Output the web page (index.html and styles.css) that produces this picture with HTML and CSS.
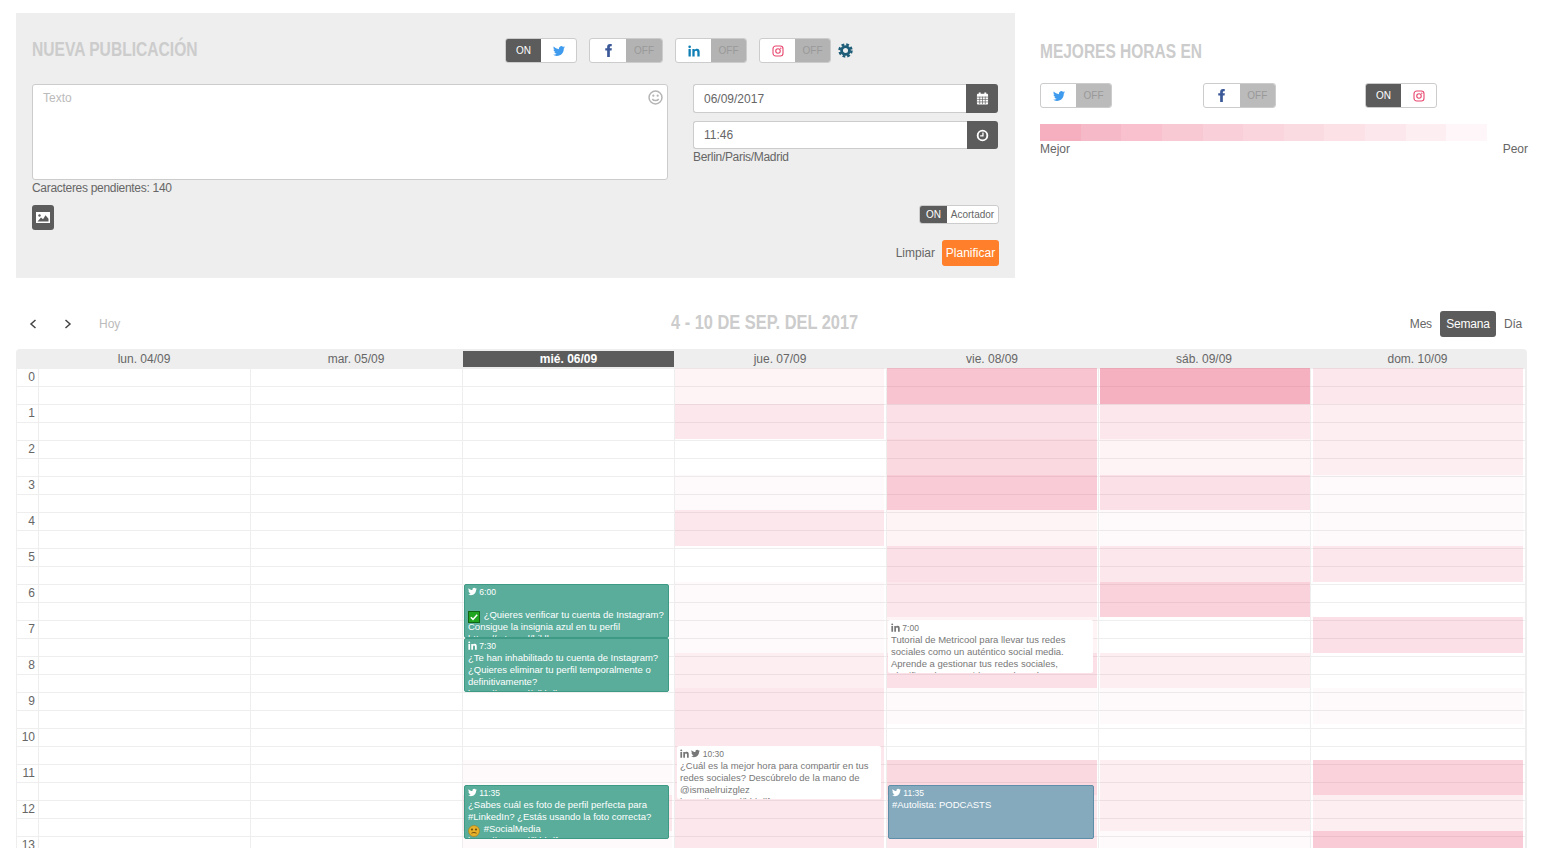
FILE: index.html
```html
<!DOCTYPE html>
<html lang="es">
<head>
  <meta charset="UTF-8">
  <meta name="viewport" content="width=device-width, initial-scale=1.0">
  <title>Planificador</title>
  <link rel="stylesheet" href="styles.css">
</head>
<body>
  <svg class="icon-defs" xmlns="http://www.w3.org/2000/svg">
    <symbol id="i-tw" viewBox="0 0 24 24"><path fill="currentColor" d="M23.953 4.57a10 10 0 01-2.825.775 4.958 4.958 0 002.163-2.723c-.951.555-2.005.959-3.127 1.184a4.92 4.92 0 00-8.384 4.482C7.69 8.095 4.067 6.13 1.64 3.162a4.822 4.822 0 00-.666 2.475c0 1.71.87 3.213 2.188 4.096a4.904 4.904 0 01-2.228-.616v.06a4.923 4.923 0 003.946 4.827 4.996 4.996 0 01-2.212.085 4.936 4.936 0 004.604 3.417 9.867 9.867 0 01-6.102 2.105c-.39 0-.779-.023-1.17-.067a13.995 13.995 0 007.557 2.209c9.053 0 13.998-7.496 13.998-13.985 0-.21 0-.42-.015-.63A9.935 9.935 0 0024 4.59z"/></symbol>
    <symbol id="i-fb" viewBox="0 0 24 24"><path fill="currentColor" d="M14.5 8V5.5c0-1 .5-1.5 1.6-1.5H18V0h-3.2C11.2 0 9.5 2.2 9.5 5.2V8H6v4h3.5v12h5V12h3.2l.5-4z"/></symbol>
    <symbol id="i-li" viewBox="0 0 24 24"><path fill="currentColor" d="M1 8h4.6v15H1zM3.3 1a2.6 2.6 0 110 5.300 2.600 2.600 0 010-5.300zM8.700 8h4.400v2.100c.7-1.300 2.300-2.500 4.600-2.500 4.700 0 5.600 3.100 5.600 7.100V23h-4.600v-7.300c0-1.800 0-4-2.500-4s-2.900 1.900-2.900 3.900V23H8.700z"/></symbol>
    <symbol id="i-ig" viewBox="0 0 24 24"><g fill="none" stroke="currentColor" stroke-width="2.200"><rect x="2" y="2" width="20" height="20" rx="5.500"/><circle cx="12" cy="12" r="4.500"/></g><circle cx="17.600" cy="6.400" r="1.400" fill="currentColor"/></symbol>
  </svg>

  <div class="top">
    <section class="panel">
      <div class="panel-head">
        <h2 class="heading heading-new">NUEVA PUBLICACIÓN</h2>
        <div class="toggle"><span class="tg-on">ON</span><span class="tg-icon c-tw"><svg class="ico"><use href="#i-tw"/></svg></span></div>
        <div class="toggle wide"><span class="tg-icon c-fb"><svg class="ico"><use href="#i-fb"/></svg></span><span class="tg-off">OFF</span></div>
        <div class="toggle"><span class="tg-icon c-li"><svg class="ico"><use href="#i-li"/></svg></span><span class="tg-off">OFF</span></div>
        <div class="toggle"><span class="tg-icon c-ig"><svg class="ico"><use href="#i-ig"/></svg></span><span class="tg-off">OFF</span></div>
        <svg class="gear" viewBox="0 0 16 16"><circle cx="8" cy="8" r="4.200" fill="none" stroke="#1d5d78" stroke-width="3"/><circle cx="8" cy="8" r="6.400" fill="none" stroke="#1d5d78" stroke-width="2.600" stroke-dasharray="2.900 2.130"/></svg>
      </div>
      <div class="form-row">
        <div class="form-left">
          <div class="text-wrap">
            <textarea class="text-box" placeholder="Texto"></textarea>
            <svg class="smile" viewBox="0 0 16 16"><g fill="none" stroke="#b5b5b5" stroke-width="1.600"><circle cx="8" cy="8" r="6.900"/><path d="M4.600 9.600c1.500 2.300 5.300 2.300 6.800 0"/></g><circle cx="5.700" cy="6" r="1.200" fill="#b5b5b5"/><circle cx="10.300" cy="6" r="1.200" fill="#b5b5b5"/></svg>
          </div>
          <div class="count">Caracteres pendientes: 140</div>
          <button class="img-btn" type="button"><svg class="img-ico" viewBox="0 0 14 11"><rect x=".5" y=".5" width="13" height="10" fill="#fff" stroke="#fff"/><path d="M1.500 9.500l3.500-4 2 1.800 2.500-4 3 3.500v2.700z" fill="#5c5c5c"/><circle cx="3.500" cy="3.500" r="1.200" fill="#5c5c5c"/></svg></button>
        </div>
        <div class="form-right">
          <div class="input-group">
            <input class="field" type="text" value="06/09/2017">
            <span class="addon"><svg class="addon-ico" viewBox="0 0 14 14"><rect x="1" y="2" width="12" height="11.500" rx="1" fill="#fff"/><rect x="3" y=".5" width="2" height="3" fill="#fff"/><rect x="9" y=".5" width="2" height="3" fill="#fff"/><path d="M1 5.500h12M1 8h12M1 10.700h12M4 5v8M7 5v8M10 5v8" stroke="#5c5c5c" stroke-width=".7"/></svg></span>
          </div>
          <div class="input-group time">
            <input class="field" type="text" value="11:46">
            <span class="addon"><svg class="addon-ico" viewBox="0 0 14 14"><circle cx="7" cy="7" r="5.200" fill="none" stroke="#fff" stroke-width="2"/><path d="M7.500 3.800v3.700H4.500" fill="none" stroke="#fff" stroke-width="1.400"/></svg></span>
          </div>
          <div class="zone">Berlin/Paris/Madrid</div>
          <div class="short-row">
            <div class="toggle small"><span class="tg-on">ON</span><span class="tg-text">Acortador</span></div>
          </div>
          <div class="actions">
            <a class="link-clear">Limpiar</a>
            <button class="btn-plan" type="button">Planificar</button>
          </div>
        </div>
      </div>
    </section>

    <section class="best">
      <h2 class="heading best-title">MEJORES HORAS EN</h2>
      <div class="best-toggles">
        <div class="toggle"><span class="tg-icon c-tw"><svg class="ico"><use href="#i-tw"/></svg></span><span class="tg-off">OFF</span></div>
        <div class="toggle mid"><span class="tg-icon c-fb"><svg class="ico"><use href="#i-fb"/></svg></span><span class="tg-off">OFF</span></div>
        <div class="toggle"><span class="tg-on">ON</span><span class="tg-icon c-ig"><svg class="ico"><use href="#i-ig"/></svg></span></div>
      </div>
      <div class="legend">
        <div class="step s11"></div><div class="step s10"></div><div class="step s9"></div><div class="step s8"></div><div class="step s7"></div><div class="step s6"></div><div class="step s5"></div><div class="step s4"></div><div class="step s3"></div><div class="step s2"></div><div class="step s1"></div>
      </div>
      <div class="legend-labels"><span>Mejor</span><span>Peor</span></div>
    </section>
  </div>

  <div class="toolbar">
    <div class="nav">
      <svg class="chev" viewBox="0 0 8 10"><path d="M6.500 1L2 5l4.500 4" fill="none" stroke="#444" stroke-width="1.500"/></svg>
      <svg class="chev" viewBox="0 0 8 10"><path d="M1.500 1L6 5 1.500 9" fill="none" stroke="#444" stroke-width="1.500"/></svg>
      <span class="today">Hoy</span>
    </div>
    <h2 class="heading range">4 - 10 DE SEP. DEL 2017</h2>
    <div class="views">
      <span>Mes</span>
      <span class="view-active">Semana</span>
      <span>Día</span>
    </div>
  </div>

  <div class="calendar">
    <div class="cal-head">
      <div></div>
      <div class="day-name">lun. 04/09</div>
      <div class="day-name">mar. 05/09</div>
      <div class="day-name today-col">mié. 06/09</div>
      <div class="day-name">jue. 07/09</div>
      <div class="day-name">vie. 08/09</div>
      <div class="day-name">sáb. 09/09</div>
      <div class="day-name">dom. 10/09</div>
    </div>
    <div class="cal-body">
      <div class="hours">
        <div>0</div><div>1</div><div>2</div><div>3</div><div>4</div><div>5</div><div>6</div><div>7</div><div>8</div><div>9</div><div>10</div><div>11</div><div>12</div><div>13</div>
      </div>
      <div class="day"></div>
      <div class="day"></div>
      <div class="day d-wed">
        <div class="h l0"></div><div class="h l0"></div><div class="h l0"></div><div class="h l0"></div><div class="h l0"></div><div class="h l0"></div><div class="h l0"></div><div class="h l0"></div><div class="h l0"></div><div class="h l0"></div><div class="h l0"></div><div class="h l1"></div><div class="h l4"></div><div class="h l1"></div>
        <div class="event green ev-600">
          <div class="ev-meta"><svg class="ev-ico"><use href="#i-tw"/></svg> 6:00</div>
          <div class="ev-blank"></div>
          <svg class="emoji" viewBox="0 0 12 12"><rect x=".5" y=".5" width="11" height="11" fill="#1fa51f" stroke="#136613"/><path d="M2.800 6.200l2.200 2.200 4.200-4.600" fill="none" stroke="#fff" stroke-width="1.500"/></svg> ¿Quieres verificar tu cuenta de Instagram? Consigue la insignia azul en tu perfil
          <div>https://mtr.cool/hjklbg</div>
        </div>
        <div class="event green ev-730">
          <div class="ev-meta"><svg class="ev-ico"><use href="#i-li"/></svg> 7:30</div>
          ¿Te han inhabilitado tu cuenta de Instagram? ¿Quieres eliminar tu perfil temporalmente o definitivamente?
          <div>https://mtr.cool/plkbdh</div>
        </div>
        <div class="event green ev-1135">
          <div class="ev-meta"><svg class="ev-ico"><use href="#i-tw"/></svg> 11:35</div>
          ¿Sabes cuál es foto de perfil perfecta para #LinkedIn? ¿Estás usando la foto correcta?
          <div><svg class="emoji" viewBox="0 0 12 12"><circle cx="6" cy="6" r="5.500" fill="#e8b12a" stroke="#a87a12" stroke-width=".6"/><circle cx="4" cy="4.500" r=".9" fill="#5a3d08"/><circle cx="8" cy="4.500" r=".9" fill="#5a3d08"/><path d="M3.500 8.200c1.500-.9 3.200-.9 5 0" fill="none" stroke="#5a3d08" stroke-width=".9"/></svg> #SocialMedia</div>
          <div>https://mtr.cool/lkbhdf</div>
        </div>
      </div>
      <div class="day d-thu">
        <div class="h l2"></div><div class="h l4"></div><div class="h l0"></div><div class="h l1"></div><div class="h l4"></div><div class="h l0"></div><div class="h l1"></div><div class="h l1"></div><div class="h l3"></div><div class="h l4"></div><div class="h l4"></div><div class="h l4"></div><div class="h l4"></div><div class="h l4"></div>
        <div class="event plain ev-1030">
          <div class="ev-meta"><svg class="ev-ico"><use href="#i-li"/></svg> <svg class="ev-ico"><use href="#i-tw"/></svg> 10:30</div>
          ¿Cuál es la mejor hora para compartir en tus redes sociales? Descúbrelo de la mano de @ismaelruizglez
          <div>https://mtr.cool/bhkdlf</div>
        </div>
      </div>
      <div class="day d-fri">
        <div class="h l9"></div><div class="h l5"></div><div class="h l6"></div><div class="h l8"></div><div class="h l2"></div><div class="h l5"></div><div class="h l4"></div><div class="h l2"></div><div class="h l5"></div><div class="h l1"></div><div class="h l0"></div><div class="h l6"></div><div class="h l4"></div><div class="h l4"></div>
        <div class="event plain ev-700">
          <div class="ev-meta"><svg class="ev-ico"><use href="#i-li"/></svg> 7:00</div>
          Tutorial de Metricool para llevar tus redes sociales como un auténtico social media. Aprende a gestionar tus redes sociales, planificando contenido y mucho más
        </div>
        <div class="event blue ev-1135-b">
          <div class="ev-meta"><svg class="ev-ico"><use href="#i-tw"/></svg> 11:35</div>
          #Autolista: PODCASTS
        </div>
      </div>
      <div class="day d-sat">
        <div class="h l12"></div><div class="h l4"></div><div class="h l2"></div><div class="h l5"></div><div class="h l1"></div><div class="h l4"></div><div class="h l7"></div><div class="h l0"></div><div class="h l3"></div><div class="h l1"></div><div class="h l0"></div><div class="h l3"></div><div class="h l3"></div><div class="h l1"></div>
      </div>
      <div class="day d-sun">
        <div class="h l4"></div><div class="h l3"></div><div class="h l3"></div><div class="h l1"></div><div class="h l1"></div><div class="h l4"></div><div class="h l0"></div><div class="h l5"></div><div class="h l0"></div><div class="h l1"></div><div class="h l0"></div><div class="h l7"></div><div class="h l3"></div><div class="h l8"></div>
      </div>
    </div>
  </div>
</body>
</html>
```

FILE: styles.css
```css
html, body { margin: 0; padding: 0; height: 848px; overflow: hidden; }
body {
  font-family: "Liberation Sans", Arial, sans-serif;
  font-size: 12px;
  color: #666;
  background-color: #fff;
}
.icon-defs { display: none; }

/* no condensed face installed, so the bold sans is squeezed */
.heading {
  margin: 0;
  font-family: "Liberation Sans", Arial, sans-serif;
  font-size: 20px;
  font-weight: bold;
  line-height: 24px;
  color: #ccc;
  white-space: nowrap;
  transform-origin: left center;
}

/* top area */
.top { display: flex; padding: 13px 0 0 16px; }
.panel { width: 999px; height: 265px; box-sizing: border-box; padding: 25px 16px 0; background-color: #eee; }
.panel-head { display: flex; align-items: center; height: 25px; margin-bottom: 21px; }
.heading-new { width: 473px; margin-bottom: 4px; transform: scaleX(.78); flex: none; }
.panel-head .toggle { margin-right: 12px; }
.gear { width: 15px; height: 15px; margin-left: -5px; }

.toggle {
  display: flex;
  height: 25px;
  width: 72px;
  box-sizing: border-box;
  border: 1px solid #ccc;
  border-radius: 3px;
  overflow: hidden;
  background-color: #fff;
  font-size: 10px;
}
.toggle.wide { width: 74px; }
.toggle.mid { width: 73px; }
.toggle span { display: flex; flex: 1; align-items: center; justify-content: center; }
.tg-on { background-color: #5c5c5c; color: #fff; }
.tg-off { background-color: #b3b3b3; color: #999; }
.ico { width: 12px; height: 12px; }
.c-tw { color: #3f9bee; }
.c-fb { color: #3b5998; }
.c-fb .ico { width: 13px; height: 13px; }
.c-li { color: #0f7fb5; }
.c-ig { color: #e8466e; }

.form-row { display: flex; gap: 25px; }
.form-left { width: 636px; }
.form-right { width: 306px; }

.text-wrap { position: relative; height: 96px; }
.text-box {
  display: block;
  width: 100%;
  height: 96px;
  box-sizing: border-box;
  padding: 6px 10px;
  border: 1px solid #ccc;
  border-radius: 3px;
  resize: none;
  font: 12px "Liberation Sans", Arial, sans-serif;
  outline: none;
}
.text-box::placeholder { color: #bbb; }
.smile { position: absolute; top: 6px; right: 5px; width: 15px; height: 15px; }
.count { height: 16px; line-height: 16px; letter-spacing: -.3px; }
.img-btn { display: flex; align-items: center; justify-content: center; width: 22px; height: 25px; margin-top: 9px; padding: 0; border: none; border-radius: 3px; background-color: #5c5c5c; }
.img-ico { width: 14px; height: 11px; }

.input-group { display: flex; height: 29px; margin-right: 1px; margin-bottom: 8px; }
.input-group.time { height: 28px; margin-bottom: 0; }
.field {
  flex: 1;
  min-width: 0;
  box-sizing: border-box;
  padding: 0 10px;
  border: 1px solid #ccc;
  border-right: none;
  border-radius: 3px 0 0 3px;
  font: 12px "Liberation Sans", Arial, sans-serif;
  color: #666;
  outline: none;
}
.addon { display: flex; align-items: center; justify-content: center; width: 32px; border-radius: 0 3px 3px 0; background-color: #5c5c5c; }
.time .addon { width: 31px; }
.addon-ico { width: 13px; height: 13px; }
.zone { height: 16px; line-height: 16px; letter-spacing: -.3px; }
.short-row { display: flex; justify-content: flex-end; margin-top: 40px; }
.toggle.small { width: 80px; height: 19px; }
.toggle.small .tg-on { flex: 0 0 27px; font-size: 10px; }
.toggle.small .tg-text { font-size: 10px; color: #666; }
.actions { display: flex; align-items: center; justify-content: flex-end; gap: 7px; margin-top: 16px; }
.link-clear { color: #666; }
.btn-plan { width: 57px; height: 26px; padding: 0; border: none; border-radius: 3px; background-color: #ff7f2a; color: #fff; font: 12px "Liberation Sans", Arial, sans-serif; }

.best { width: 488px; margin-left: 25px; padding-top: 26px; }
.best-title { transform: scaleX(.775); }
.best-toggles { display: flex; gap: 91px; margin-top: 20px; }
.best-toggles .toggle:last-child { margin-left: -2px; }
.best .tg-off { background-color: #bbb; }
.legend { display: flex; width: 447px; height: 17px; margin-top: 16px; }
.step { flex: 1; }
.s11 { background-color: #f5afbe; }
.s10 { background-color: #f6b9c7; }
.s9 { background-color: #f8c1cd; }
.s8 { background-color: #f8c8d3; }
.s7 { background-color: #f9cfd9; }
.s6 { background-color: #fad5dd; }
.s5 { background-color: #fbdbe2; }
.s4 { background-color: #fce2e7; }
.s3 { background-color: #fce8ec; }
.s2 { background-color: #fdeef1; }
.s1 { background-color: #fef6f8; }
.legend-labels { display: flex; justify-content: space-between; line-height: 16px; }

/* calendar toolbar */
.toolbar { display: flex; align-items: center; height: 26px; margin: 33px 16px 12px; }
.nav { display: flex; align-items: center; gap: 27px; width: 655px; box-sizing: border-box; padding-left: 13px; }
.chev { width: 8px; height: 10px; }
.today { color: #bbb; }
.range { margin-bottom: 4px; transform: scaleX(.82); }
.views { display: flex; align-items: center; gap: 8px; margin-left: auto; padding-right: 5px; letter-spacing: -.2px; }
.view-active { width: 56px; padding: 6px 0; border-radius: 3px; background-color: #5c5c5c; color: #fff; text-align: center; }

/* calendar */
.calendar { width: 1511px; margin-left: 16px; }
.cal-head, .cal-body { display: grid; grid-template-columns: 21px repeat(6, 212px) 215px; padding-left: 1px; }
.cal-head { height: 19px; border-radius: 4px 4px 0 0; background-color: #eee; }
.day-name { padding-top: 2px; line-height: 16px; text-align: center; }
.today-col { margin-left: 1px; background-color: #5c5c5c; color: #fff; font-weight: bold; height: 16px; margin-top: 2px; padding-top: 0; }
.cal-body {
  height: 480px;
  overflow: hidden;
  box-sizing: border-box;
  border-left: 1px solid #eee;
  border-right: 2px solid #eee;
  padding-left: 0;
  background-image: repeating-linear-gradient(#eee 0 1px, transparent 1px 18px);
}
.hours div { height: 36px; padding-right: 3px; line-height: 18px; text-align: right; }
.day { position: relative; border-left: 1px solid #eee; }
.h { height: 35.6px; margin-right: 2px; }
.d-fri .h { margin-right: 1px; }
.d-sat .h { margin-left: 1px; margin-right: 0; }
.d-sun .h { margin-left: 2px; margin-right: 2px; }

.l0 { background-color: transparent; }
.l1 { background-color: rgba(232, 60, 100, .033); }
.l2 { background-color: rgba(232, 60, 100, .06); }
.l3 { background-color: rgba(232, 60, 100, .085); }
.l4 { background-color: rgba(232, 60, 100, .12); }
.l5 { background-color: rgba(232, 60, 100, .155); }
.l6 { background-color: rgba(232, 60, 100, .195); }
.l7 { background-color: rgba(232, 60, 100, .23); }
.l8 { background-color: rgba(232, 60, 100, .266); }
.l9 { background-color: rgba(232, 60, 100, .3); }
.l12 { background-color: rgba(232, 60, 100, .4); }

.event {
  position: absolute;
  box-sizing: border-box;
  height: 54px;
  padding: 2px 3px;
  overflow: hidden;
  border-radius: 2px;
  font-size: 9.5px;
  line-height: 12px;
}
.green { left: 1px; width: 205px; padding-top: 1px; border: 1px solid #3f9a85; background-color: #5aad9b; color: #fff; }
.blue { left: 1px; width: 206px; padding-top: 1px; border: 1px solid #5f8fa8; background-color: #85aabd; color: #fff; }
.plain { background-color: #fff; color: #777; }
.ev-600 { top: 216px; }
.ev-730 { top: 270px; }
.ev-1135 { top: 417px; }
.ev-1030 { top: 378px; left: 2px; width: 204px; height: 53px; }
.ev-700 { top: 252px; left: 1px; width: 205px; height: 53px; }
.ev-1135-b { top: 417px; }
.ev-meta { height: 12px; font-size: 8.500px; }
.ev-blank { height: 11px; }
.ev-ico { width: 9px; height: 9px; vertical-align: -1px; }
.emoji { width: 12px; height: 12px; margin: -2px 1px -2px 0; vertical-align: -3px; }
```
